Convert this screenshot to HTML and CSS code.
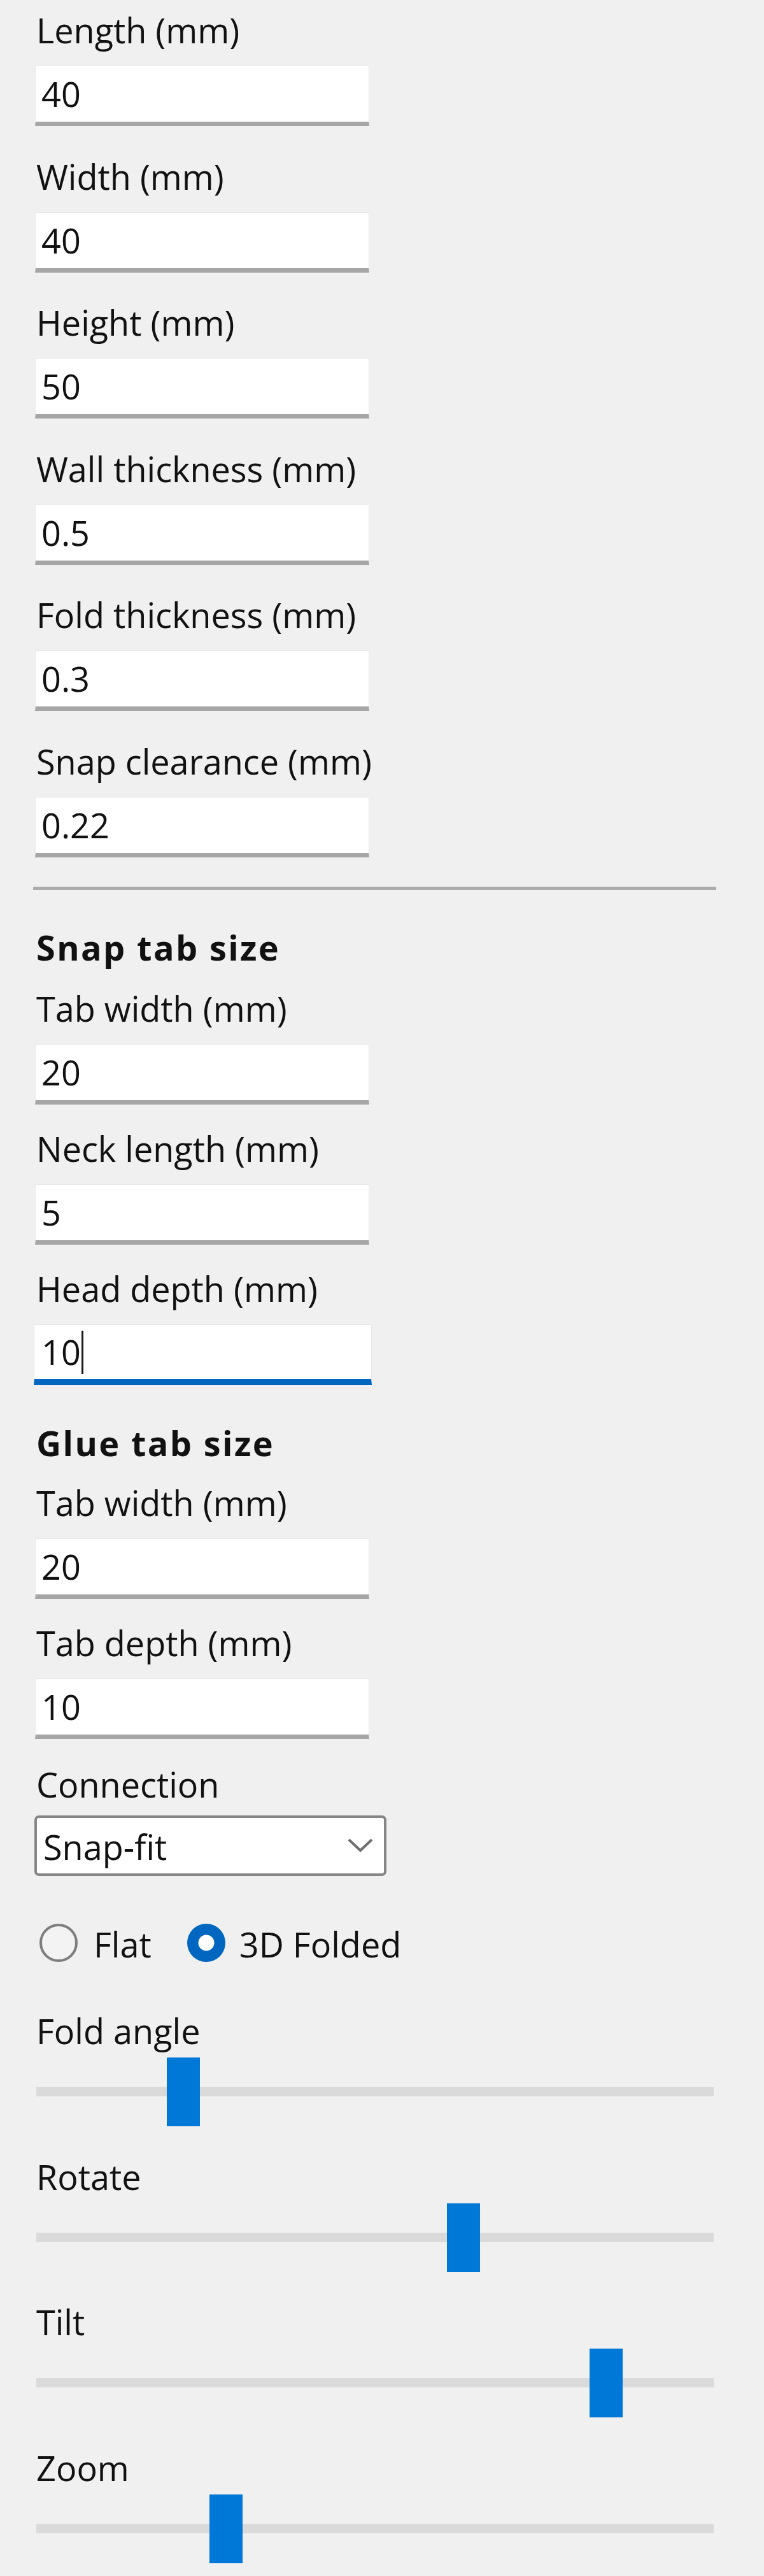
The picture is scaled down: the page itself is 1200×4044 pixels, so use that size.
FILE: index.html
```html
<!DOCTYPE html>
<html>
<head>
<meta charset="utf-8">
<title>Box settings</title>
<link rel="stylesheet" href="styles.css">
</head>
<body>
<div class="panel">
  <div class="group group-main">
    <div class="field"><div class="lbl">Length (mm)</div><div class="tb">40</div></div>
    <div class="field"><div class="lbl">Width (mm)</div><div class="tb">40</div></div>
    <div class="field"><div class="lbl">Height (mm)</div><div class="tb">50</div></div>
    <div class="field"><div class="lbl">Wall thickness (mm)</div><div class="tb">0.5</div></div>
    <div class="field"><div class="lbl">Fold thickness (mm)</div><div class="tb">0.3</div></div>
    <div class="field"><div class="lbl">Snap clearance (mm)</div><div class="tb">0.22</div></div>
  </div>

  <div class="sep"></div>

  <div class="heading heading-snap">Snap tab size</div>
  <div class="group group-tabs">
    <div class="field"><div class="lbl">Tab width (mm)</div><div class="tb">20</div></div>
    <div class="field"><div class="lbl">Neck length (mm)</div><div class="tb">5</div></div>
    <div class="field"><div class="lbl">Head depth (mm)</div><div class="tb tb-focus">10<span class="caret"></span></div></div>
  </div>

  <div class="heading heading-glue">Glue tab size</div>
  <div class="group group-tabs">
    <div class="field"><div class="lbl">Tab width (mm)</div><div class="tb">20</div></div>
    <div class="field"><div class="lbl">Tab depth (mm)</div><div class="tb">10</div></div>
  </div>

  <div class="lbl lbl-conn">Connection</div>
  <div class="combo">
    <span class="combo-text">Snap-fit</span>
    <svg class="chev" width="40" height="22" viewBox="0 0 40 22"><polyline points="2,2 20,19 38,2" fill="none" stroke="#6e6e6e" stroke-width="4"/></svg>
  </div>

  <div class="radios">
    <div class="opt"><span class="rb"></span><span class="rb-text">Flat</span></div>
    <div class="opt opt-2"><span class="rb rb-on"></span><span class="rb-text">3D Folded</span></div>
  </div>

  <div class="sliders">
    <div class="sl-block"><div class="lbl">Fold angle</div><div class="slider"><div class="track"></div><div class="thumb" style="left:205px"></div></div></div>
    <div class="sl-block"><div class="lbl">Rotate</div><div class="slider"><div class="track"></div><div class="thumb" style="left:645px"></div></div></div>
    <div class="sl-block"><div class="lbl">Tilt</div><div class="slider"><div class="track"></div><div class="thumb" style="left:869px"></div></div></div>
    <div class="sl-block"><div class="lbl">Zoom</div><div class="slider"><div class="track"></div><div class="thumb" style="left:272px"></div></div></div>
  </div>
</div>
</body>
</html>
```

FILE: styles.css
```css
html {
  background: #f0f0f0;
}
body {
  margin: 0;
  background: #f0f0f0;
  font-family: "Open Sans", "Noto Sans", "Liberation Sans", sans-serif;
  color: #111;
  font-size: 54px;
}
.panel {
  padding: 10px 0 0 57px;
  display: flex;
  flex-direction: column;
  width: 1068px;
}
.group {
  display: flex;
  flex-direction: column;
}
.group-main {
  gap: 41.5px;
}
.group-tabs {
  gap: 32px;
}
.field {
  display: flex;
  flex-direction: column;
  gap: 19px;
}
.lbl {
  font-size: 54px;
  line-height: 74px;
  height: 74px;
  white-space: nowrap;
}
.tb {
  box-sizing: border-box;
  width: 525px;
  height: 95px;
  margin-left: -2px;
  background: #fff;
  border: 1px solid #e9e9e9;
  border-bottom: 7px solid #a6a6a6;
  padding-left: 9px;
  line-height: 87px;
  font-size: 54px;
  position: relative;
}
.tb-focus {
  border-bottom: 9px solid #0067c0;
  line-height: 85px;
  width: 531px;
  margin-left: -4px;
  padding-left: 11px;
}
.caret {
  display: inline-block;
  width: 3px;
  height: 68px;
  background: #1a1a1a;
  vertical-align: -14px;
  margin-left: 1px;
}
.sep {
  margin-top: 46.5px;
  margin-left: -5px;
  width: 1073px;
  height: 5px;
  background: #acacac;
}
.heading {
  font-weight: 700;
  font-size: 54px;
  line-height: 74px;
  height: 74px;
  letter-spacing: 2.4px;
  margin-bottom: 22px;
}
.heading-snap {
  margin-top: 53px;
}
.heading-glue {
  margin-top: 54px;
  margin-bottom: 20px;
}
.lbl-conn {
  margin-top: 34px;
}
.combo {
  margin-top: 12px;
  margin-left: -3px;
  box-sizing: border-box;
  width: 553px;
  height: 95px;
  background: #fff;
  border: 4px solid #868686;
  border-radius: 7px;
  display: flex;
  align-items: center;
  justify-content: space-between;
  padding: 0 17px 0 10px;
}
.combo-text {
  line-height: 80px;
  margin-top: 2px;
}
.chev {
  display: block;
  margin-top: -2px;
}
.radios {
  margin-top: 75px;
  display: flex;
  align-items: center;
  height: 60px;
  padding-left: 5px;
}
.opt {
  display: flex;
  align-items: center;
  gap: 25px;
}
.opt-2 {
  margin-left: 56px;
  gap: 22px;
}
.rb {
  box-sizing: border-box;
  width: 60px;
  height: 60px;
  border-radius: 50%;
  border: 4px solid #7e7e7e;
  background: #f3f3f3;
  flex: none;
}
.rb-on {
  border: none;
  background: radial-gradient(circle at center, #fff 0 12px, #0067c0 13px);
}
.rb-text {
  line-height: 60px;
  margin-top: 4px;
}
.sliders {
  margin-top: 71px;
  display: flex;
  flex-direction: column;
  gap: 41.5px;
}
.sl-block {
  display: flex;
  flex-direction: column;
  gap: 5px;
}
.slider {
  position: relative;
  width: 1064px;
  height: 108px;
}
.track {
  position: absolute;
  left: 0;
  right: 0;
  top: 46px;
  height: 15px;
  background: #dadada;
}
.thumb {
  position: absolute;
  top: 0;
  width: 52px;
  height: 108px;
  background: #0078d7;
}
```
